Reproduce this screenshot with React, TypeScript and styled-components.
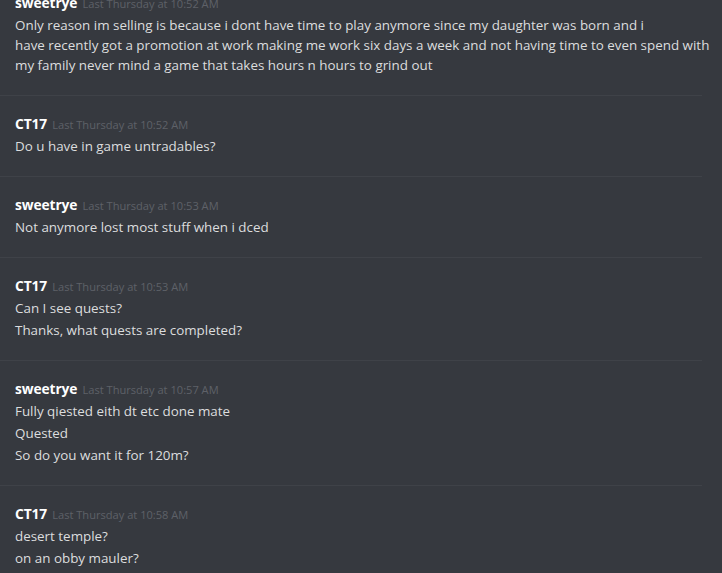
import React from "react";
import styled, { createGlobalStyle } from "styled-components";

const Global = createGlobalStyle`
  html, body { margin: 0; padding: 0; background: #36393f; }
  body { width: 722px; height: 573px; overflow: hidden; }
`;

const Viewport = styled.div`
  width: 722px;
  height: 573px;
  overflow: hidden;
  background: #36393f;
  font-family: "Open Sans", "Noto Sans", sans-serif;
`;

const List = styled.div`
  display: flex;
  flex-direction: column;
  margin-top: -25px;
  width: 702px;
`;

const Group = styled.section`
  padding: 17px 0 19px 15px;
  border-bottom: 1px solid #3f4248;
  display: flex;
  flex-direction: column;
`;

const Header = styled.div`
  display: flex;
  align-items: baseline;
  gap: 5px;
  height: 22px;
  line-height: 22px;
`;

const Name = styled.span`
  color: #ffffff;
  font-weight: 700;
  font-size: 13.8px;
  letter-spacing: -0.1px;
`;

const Time = styled.span`
  color: #5e6168;
  font-size: 11.1px;
`;

const Line = styled.div`
  color: #dcddde;
  font-size: 13.4px;
  line-height: 20px;
  padding: 1px 0;
  white-space: pre;
`;

type Msg = { name: string; time: string; lines: string[] };

const data: Msg[] = [
  {
    name: "sweetrye",
    time: "Last Thursday at 10:52 AM",
    lines: [
      "Only reason im selling is because i dont have time to play anymore since my daughter was born and i\nhave recently got a promotion at work making me work six days a week and not having time to even spend with\nmy family never mind a game that takes hours n hours to grind out",
    ],
  },
  { name: "CT17", time: "Last Thursday at 10:52 AM", lines: ["Do u have in game untradables?"] },
  { name: "sweetrye", time: "Last Thursday at 10:53 AM", lines: ["Not anymore lost most stuff when i dced"] },
  {
    name: "CT17",
    time: "Last Thursday at 10:53 AM",
    lines: ["Can I see quests?", "Thanks, what quests are completed?"],
  },
  {
    name: "sweetrye",
    time: "Last Thursday at 10:57 AM",
    lines: ["Fully qiested eith dt etc done mate", "Quested", "So do you want it for 120m?"],
  },
  {
    name: "CT17",
    time: "Last Thursday at 10:58 AM",
    lines: ["desert temple?", "on an obby mauler?"],
  },
];

export default function App() {
  return (
    <Viewport>
      <Global />
      <List>
        {data.map((m, i) => (
          <Group key={i}>
            <Header>
              <Name>{m.name}</Name>
              <Time>{m.time}</Time>
            </Header>
            {m.lines.map((l, j) => (
              <Line key={j}>{l}</Line>
            ))}
          </Group>
        ))}
      </List>
    </Viewport>
  );
}
